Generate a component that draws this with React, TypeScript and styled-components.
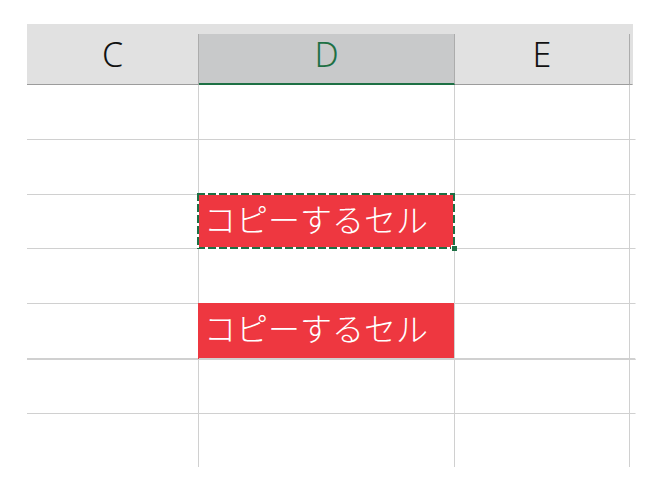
import styled, { createGlobalStyle, css } from 'styled-components';

const GREEN = '#1d7044';
const RED = '#ee3740';
const GRID = '#d0d0d0';

const GlobalStyle = createGlobalStyle`
  html, body {
    margin: 0;
    background: #ffffff;
  }
  body {
    font-family: "Noto Sans", "Noto Sans CJK JP", sans-serif;
  }
`;

const COLUMNS = '172px 256px 175px 3px';

const Sheet = styled.div`
  padding: 24px 0 0 27px;
  width: 606px;
`;

const HeaderRow = styled.div`
  display: grid;
  grid-template-columns: ${COLUMNS};
  background: #e1e1e1;
  padding-top: 10px;
`;

const HeaderCell = styled.div<{ $selected?: boolean; $edge?: boolean }>`
  box-sizing: border-box;
  height: 51px;
  display: flex;
  justify-content: center;
  align-items: flex-start;
  padding-top: 3px;
  font-family: "Noto Sans", sans-serif;
  font-weight: 300;
  font-size: 34px;
  line-height: 34px;
  color: #111111;
  border-right: 1px solid ${({ $edge }) => ($edge ? 'transparent' : '#acacac')};
  border-bottom: 1px solid #9c9c9c;

  ${({ $selected }) =>
    $selected &&
    css`
      background: #c8c9ca;
      color: ${GREEN};
      border-bottom: 2px solid ${GREEN};
    `}
`;

const Row = styled.div<{ $height: number; $thick?: boolean; $last?: boolean }>`
  display: grid;
  grid-template-columns: ${COLUMNS};
  height: ${({ $height }) => $height}px;

  & > div {
    border-bottom: ${({ $thick, $last }) =>
      $last ? '0' : $thick ? `2px solid ${GRID}` : `1px solid ${GRID}`};
  }
`;

const Cell = styled.div<{ $fill?: boolean; $edge?: boolean }>`
  position: relative;
  box-sizing: border-box;
  display: flex;
  align-items: center;
  padding: 0 0 8px 5px;
  border-right: 1px solid ${({ $edge }) => ($edge ? 'transparent' : GRID)};

  ${({ $fill }) =>
    $fill &&
    css`
      background: ${RED};
      box-shadow: -1px -1px 0 ${RED};
    `}
`;

const Label = styled.span`
  font-family: "Noto Sans CJK JP", sans-serif;
  font-weight: 300;
  font-size: 32px;
  line-height: 32px;
  color: #ffffff;
  white-space: nowrap;
`;

const Marquee = styled.div`
  position: absolute;
  top: -2px;
  left: -2px;
  right: -1px;
  bottom: -1px;
  border: 2px solid ${GREEN};
  pointer-events: none;

  &::before {
    content: '';
    position: absolute;
    inset: -2px;
    background:
      repeating-linear-gradient(90deg, transparent 0 8px, #ffffff 8px 11px) top left / 100% 2px no-repeat,
      repeating-linear-gradient(90deg, transparent 0 8px, #ffffff 8px 11px) bottom left / 100% 2px no-repeat,
      repeating-linear-gradient(180deg, transparent 0 8px, #ffffff 8px 11px) top left / 2px 100% no-repeat,
      repeating-linear-gradient(180deg, transparent 0 8px, #ffffff 8px 11px) top right / 2px 100% no-repeat;
  }
`;

const FillHandle = styled.div`
  position: absolute;
  right: -4px;
  bottom: -4px;
  width: 5px;
  height: 5px;
  background: ${GREEN};
  border-left: 1px solid #ffffff;
  border-top: 1px solid #ffffff;
  z-index: 1;
`;

type RowSpec = { height: number; thick?: boolean; last?: boolean; label?: string; marquee?: boolean };

const rows: RowSpec[] = [
  { height: 55 },
  { height: 55 },
  { height: 54, label: 'コピーするセル', marquee: true },
  { height: 55 },
  { height: 56, thick: true, label: 'コピーするセル' },
  { height: 54 },
  { height: 53, last: true },
];

export default function App() {
  return (
    <>
      <GlobalStyle />
      <Sheet>
        <HeaderRow>
          <HeaderCell>C</HeaderCell>
          <HeaderCell $selected>D</HeaderCell>
          <HeaderCell>E</HeaderCell>
          <HeaderCell $edge />
        </HeaderRow>
        {rows.map((row, i) => (
          <Row key={i} $height={row.height} $thick={row.thick} $last={row.last}>
            <Cell />
            <Cell $fill={!!row.label}>
              {row.label && <Label>{row.label}</Label>}
              {row.marquee && (
                <Marquee>
                  <FillHandle />
                </Marquee>
              )}
            </Cell>
            <Cell />
            <Cell $edge />
          </Row>
        ))}
      </Sheet>
    </>
  );
}
